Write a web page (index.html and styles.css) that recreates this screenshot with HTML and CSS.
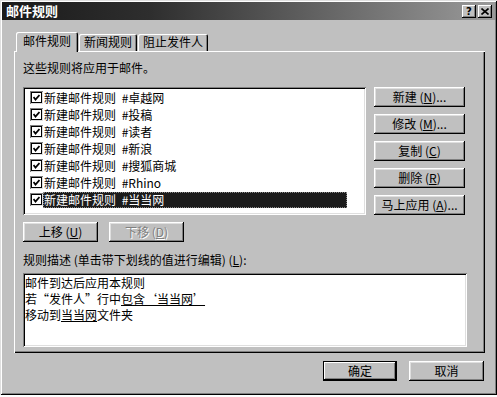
FILE: index.html
```html
<!DOCTYPE html>
<html lang="zh-CN">
<head>
    <meta charset="UTF-8">
    <title>邮件规则</title>
    <link rel="stylesheet" href="styles.css">
</head>
<body>
    <div class="window">
        <div class="titlebar">
            <span class="title">邮件规则</span>
            <div class="caption-btns">
                <span class="cbtn help">?</span>
                <span class="cbtn">
                    <svg width="8" height="7" viewBox="0 0 8 7"><path d="M0.5 0.5 L7.5 6.5 M7.5 0.5 L0.5 6.5" stroke="#000" stroke-width="1.6" fill="none"/></svg>
                </span>
            </div>
        </div>

        <div class="content">
            <div class="tabs">
                <div class="tab active">邮件规则</div>
                <div class="tab">新闻规则</div>
                <div class="tab">阻止发件人</div>
            </div>

            <div class="sheet">
                <p class="hint">这些规则将应用于邮件。</p>

                <div class="rules-row">
                    <ul class="rule-list">
                        <li class="rule"><span class="box"><svg width="7" height="7" viewBox="0 0 7 7"><path d="M0.5 3 L2.5 5.5 L6.5 1" stroke="#000" stroke-width="1.8" fill="none"/></svg></span><span class="label">新建邮件规则 #卓越网</span></li>
                        <li class="rule"><span class="box"><svg width="7" height="7" viewBox="0 0 7 7"><path d="M0.5 3 L2.5 5.5 L6.5 1" stroke="#000" stroke-width="1.8" fill="none"/></svg></span><span class="label">新建邮件规则 #投稿</span></li>
                        <li class="rule"><span class="box"><svg width="7" height="7" viewBox="0 0 7 7"><path d="M0.5 3 L2.5 5.5 L6.5 1" stroke="#000" stroke-width="1.8" fill="none"/></svg></span><span class="label">新建邮件规则 #读者</span></li>
                        <li class="rule"><span class="box"><svg width="7" height="7" viewBox="0 0 7 7"><path d="M0.5 3 L2.5 5.5 L6.5 1" stroke="#000" stroke-width="1.8" fill="none"/></svg></span><span class="label">新建邮件规则 #新浪</span></li>
                        <li class="rule"><span class="box"><svg width="7" height="7" viewBox="0 0 7 7"><path d="M0.5 3 L2.5 5.5 L6.5 1" stroke="#000" stroke-width="1.8" fill="none"/></svg></span><span class="label">新建邮件规则 #搜狐商城</span></li>
                        <li class="rule"><span class="box"><svg width="7" height="7" viewBox="0 0 7 7"><path d="M0.5 3 L2.5 5.5 L6.5 1" stroke="#000" stroke-width="1.8" fill="none"/></svg></span><span class="label">新建邮件规则 #Rhino</span></li>
                        <li class="rule"><span class="box"><svg width="7" height="7" viewBox="0 0 7 7"><path d="M0.5 3 L2.5 5.5 L6.5 1" stroke="#000" stroke-width="1.8" fill="none"/></svg></span><span class="label selected">新建邮件规则 #当当网</span></li>
                    </ul>

                    <div class="side-btns">
                        <button class="btn">新建 (<u>N</u>)...</button>
                        <button class="btn">修改 (<u>M</u>)...</button>
                        <button class="btn">复制 (<u>C</u>)</button>
                        <button class="btn">删除 (<u>R</u>)</button>
                        <button class="btn">马上应用 (<u>A</u>)...</button>
                    </div>
                </div>

                <div class="move-btns">
                    <button class="btn move">上移 (<u>U</u>)</button>
                    <button class="btn move" disabled>下移 (<u>D</u>)</button>
                </div>

                <p class="desc-label">规则描述 (单击带下划线的值进行编辑) (<u>L</u>):</p>
                <div class="desc">
                    <div>邮件到达后应用本规则</div>
                    <div>若“发件人”行中<span class="link">包含‘当当网’</span></div>
                    <div>移动到<span class="link">当当网</span>文件夹</div>
                </div>
            </div>

            <div class="footer">
                <button class="btn default">确定</button>
                <button class="btn cancel">取消</button>
            </div>
        </div>
    </div>
</body>
</html>
```

FILE: styles.css
```css
body {
    margin: 0;
    background: #fff;
    font-family: "Noto Sans CJK SC", "Noto Sans", sans-serif;
    font-size: 12px;
    color: #000;
}
.window {
    width: 497px;
    height: 395px;
    box-sizing: border-box;
    padding: 2px;
    background: #c0c0c0;
    box-shadow: inset 1px 1px #dfdfdf, inset -1px -1px #000, inset 2px 2px #fff, inset -2px -2px #808080;
}
.titlebar {
    height: 18px;
    display: flex;
    align-items: center;
    justify-content: space-between;
    padding: 0 3px 0 4px;
    background: linear-gradient(90deg, #1a1a1a, #2e2e2e 30%, #9a9a9a);
}
.title {
    color: #fff;
    font-weight: bold;
    font-size: 13px;
    line-height: 18px;
}
.caption-btns {
    display: flex;
    gap: 2px;
}
.cbtn {
    width: 14px;
    height: 13px;
    box-sizing: border-box;
    display: flex;
    align-items: center;
    justify-content: center;
    background: #c0c0c0;
    box-shadow: inset -1px -1px #000, inset 1px 1px #fff, inset -2px -2px #808080;
    font-family: "DejaVu Sans", sans-serif;
    font-weight: bold;
    font-size: 10px;
    line-height: 13px;
}
.content {
    padding: 12px 10px 0 12px;
}
.tabs {
    display: flex;
    align-items: flex-end;
    height: 19px;
    padding-left: 2px;
}
.tab {
    height: 17px;
    box-sizing: border-box;
    padding: 0 5px;
    line-height: 16px;
    border-radius: 2px 2px 0 0;
    background: #c0c0c0;
    box-shadow: inset 1px 1px #fff, inset -1px 0 #000, inset -2px 0 #808080;
    margin-right: 1px;
}
.tab.active {
    position: relative;
    z-index: 1;
    height: 20px;
    margin-bottom: -1px;
    padding: 0 7px;
    line-height: 18px;
}
.sheet {
    padding: 10px 18px 6px 9px;
    box-shadow: inset 1px 1px #fff, inset -1px -1px #000, inset -2px -2px #808080;
}
.hint {
    margin: 0;
    line-height: 14px;
}
.rules-row {
    display: flex;
    gap: 8px;
    margin-top: 12px;
    height: 128px;
}
.rule-list {
    width: 343px;
    box-sizing: border-box;
    margin: 0;
    padding: 2px 0 0 7px;
    list-style: none;
    background: #fff;
    box-shadow: inset 1px 1px #808080, inset -1px -1px #fff, inset 2px 2px #000, inset -2px -2px #dfdfdf;
}
.rule {
    height: 17px;
    display: flex;
    align-items: center;
}
.box {
    width: 13px;
    height: 13px;
    box-sizing: border-box;
    display: flex;
    align-items: center;
    justify-content: center;
    background: #fff;
    box-shadow: inset 1px 1px #808080, inset -1px -1px #dfdfdf, inset 2px 2px #000, inset -2px -2px #000;
}
.label {
    width: 304px;
    height: 16px;
    box-sizing: border-box;
    padding-left: 1px;
    line-height: 16px;
    white-space: pre;
    word-spacing: 3px;
}
.label.selected {
    background: #1c1c1c;
    color: #fff;
    outline: 1px dotted #888;
    outline-offset: -1px;
}
.side-btns {
    width: 91px;
    display: flex;
    flex-direction: column;
    gap: 7px;
}
.btn {
    height: 20px;
    padding: 0;
    border: none;
    background: #c0c0c0;
    font-family: "Noto Sans CJK SC", "Noto Sans", sans-serif;
    font-size: 12px;
    line-height: 20px;
    color: #000;
    box-shadow: inset -1px -1px #000, inset 1px 1px #fff, inset -2px -2px #808080, inset 2px 2px #dfdfdf;
}
.btn:disabled {
    color: #808080;
    text-shadow: 1px 1px #fff;
}
.move-btns {
    display: flex;
    gap: 11px;
    margin-top: 7px;
}
.move {
    width: 75px;
}
.desc-label {
    margin: 11px 0 6px;
    line-height: 14px;
}
.desc {
    width: 444px;
    height: 74px;
    box-sizing: border-box;
    padding: 2px 0 0 2px;
    background: #fff;
    line-height: 16px;
    box-shadow: inset 1px 1px #808080, inset -1px -1px #fff, inset 2px 2px #000, inset -2px -2px #dfdfdf;
}
.link {
    text-decoration: underline;
}
.footer {
    display: flex;
    justify-content: flex-end;
    gap: 12px;
    margin-top: 8px;
    padding-right: 1px;
}
.footer .btn {
    width: 74px;
}
.footer .cancel {
    width: 75px;
}
.btn.default {
    outline: 1px solid #000;
    outline-offset: -1px;
    box-shadow: inset -2px -2px #000, inset 2px 2px #fff, inset -3px -3px #808080;
}
```
